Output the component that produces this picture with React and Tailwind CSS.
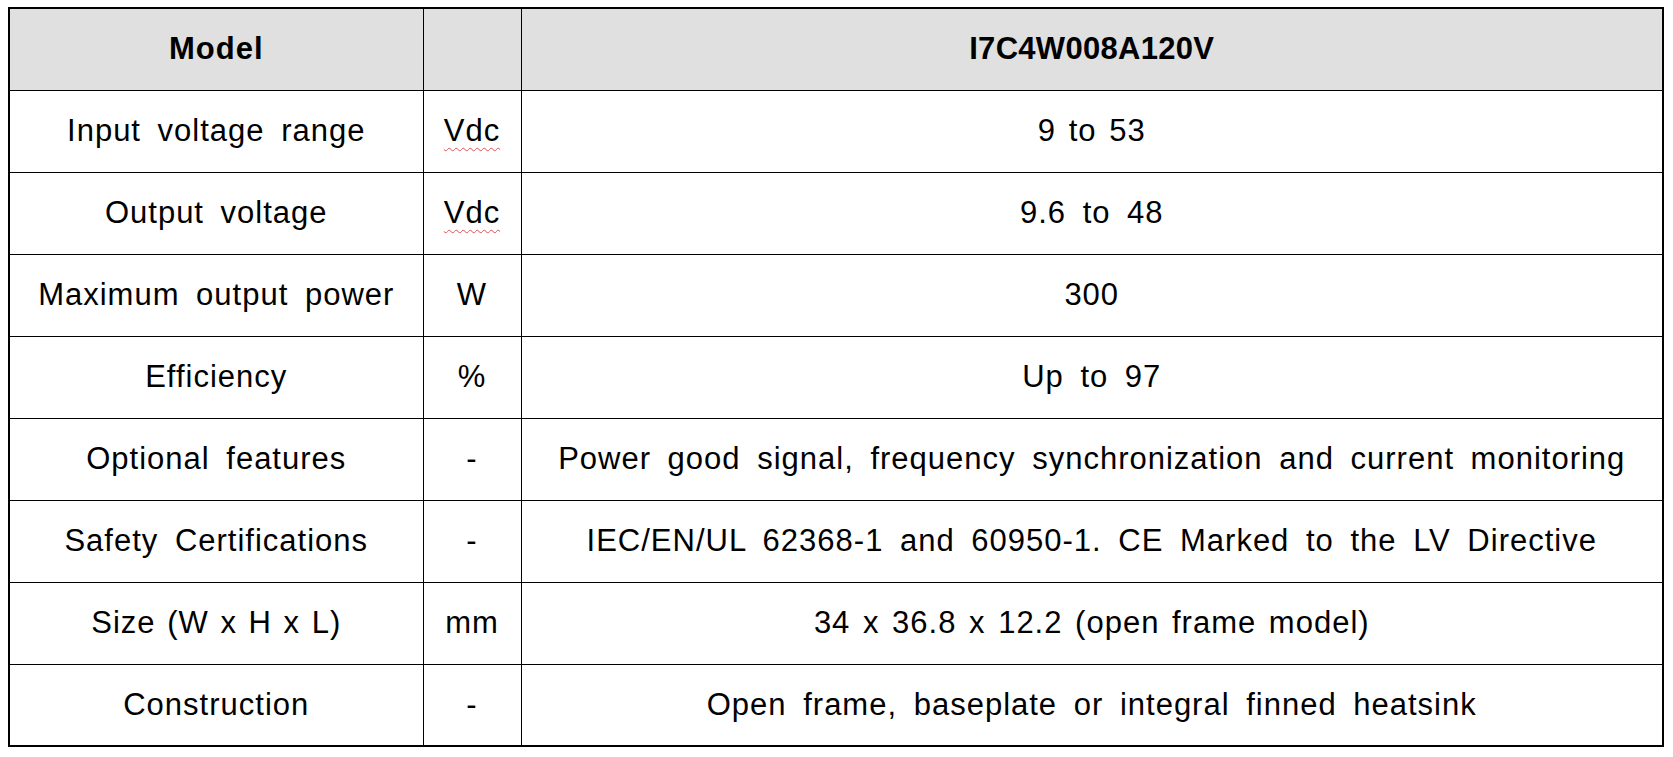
import React from "react";

const rows = [
  ["Input voltage range", "Vdc", "9 to 53", "", "[word-spacing:3px]"],
  ["Output voltage", "Vdc", "9.6 to 48", "", ""],
  ["Maximum output power", "W", "300", "", ""],
  ["Efficiency", "%", "Up to 97", "", ""],
  ["Optional features", "-", "Power good signal, frequency synchronization and current monitoring", "", ""],
  ["Safety Certifications", "-", "IEC/EN/UL 62368-1 and 60950-1. CE Marked to the LV Directive", "", ""],
  ["Size (W x H x L)", "mm", "34 x 36.8 x 12.2 (open frame model)", "[word-spacing:2px]", "[word-spacing:3px]"],
  ["Construction", "-", "Open frame, baseplate or integral finned heatsink", "", ""],
];

export default function App() {
  return (
    <div className="w-[1673px] h-[757px] bg-white pl-[8px] pt-[7px]" style={{ fontFamily: '"Liberation Sans", Arial, sans-serif' }}>
      <table className="border-collapse border-2 border-black text-[31px] text-black table-fixed w-[1654px]">
        <colgroup>
          <col className="w-[414px]" />
          <col className="w-[98px]" />
          <col className="w-[1142px]" />
        </colgroup>
        <thead>
          <tr className="h-[82px] bg-[#e0e0e0]">
            <th className="border border-black font-bold text-center p-0 tracking-[1px]">Model</th>
            <th className="border border-black p-0"></th>
            <th className="border border-black font-bold text-center p-0 tracking-[0.3px]">I7C4W008A120V</th>
          </tr>
        </thead>
        <tbody className="tracking-[1px] [word-spacing:7px]">
          {rows.map((r, i) => (
            <tr key={i} className="h-[82px]">
              <td className={"border border-black text-center p-0 whitespace-nowrap " + r[3]}>{r[0]}</td>
              <td className="border border-black text-center p-0">
                {r[1] === "Vdc" ? (
                  <span className="underline decoration-wavy decoration-[#e05050] decoration-1 underline-offset-[6px]">Vdc</span>
                ) : (
                  r[1]
                )}
              </td>
              <td className={"border border-black text-center p-0 whitespace-nowrap " + r[4]}>{r[2]}</td>
            </tr>
          ))}
        </tbody>
      </table>
    </div>
  );
}
